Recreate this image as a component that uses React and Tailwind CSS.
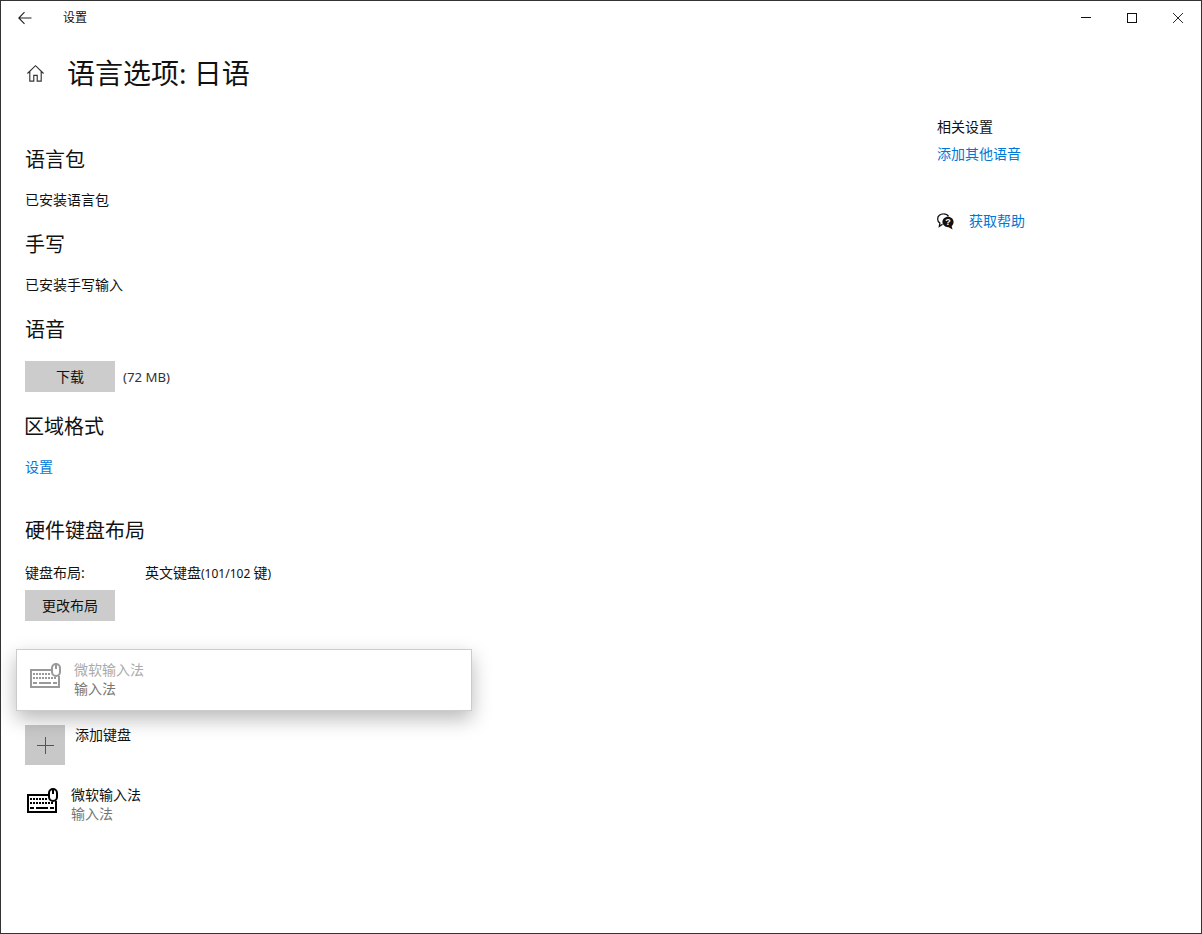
const FONT = "font-['Noto_Sans','Noto_Sans_CJK_SC',sans-serif]";

function KeyboardIcon({ className, color, sw = 2 }) {
  return (
    <svg viewBox="0 0 32 25" className={className} fill="none" stroke={color} strokeWidth={sw} shapeRendering="crispEdges">
      <path d="M23 7H2v17h28V13" />
      <rect x="23" y="1" width="8" height="12" rx="4" fill="#fff" shapeRendering="auto" />
      <path d="M27 1.5v4" />
      <path d="M4 11h17M4 15h24" strokeWidth="2" strokeDasharray="2 1" />
      <path d="M4 20h4M10 20h12M24 20h4" strokeWidth="2" />
    </svg>
  );
}

function Heading({ className = "", children }) {
  return <h2 className={`h-[28px] text-[20px] leading-[28px] font-normal text-[#111] ${className}`}>{children}</h2>;
}

function Body({ className = "", children }) {
  return <p className={`h-[20px] text-[14px] leading-[20px] text-[#111] ${className}`}>{children}</p>;
}

function GrayButton({ className = "", children }) {
  return (
    <button className={`h-[31px] w-[90px] bg-[#cccccc] text-[14px] leading-[20px] text-[#111] ${className}`}>
      {children}
    </button>
  );
}

export default function App() {
  return (
    <div className={`relative h-[934px] w-[1202px] overflow-hidden border border-[#333333] bg-white ${FONT}`}>
      <header className="flex h-[33px] items-center">
        <svg viewBox="0 0 16 16" className="ml-[16px] h-[16px] w-[16px]" fill="none" stroke="#222" strokeWidth="1.1">
          <path d="M14.5 8H2M7.5 2.2 1.8 8l5.7 5.8" />
        </svg>
        <span className="ml-[30px] text-[12px] leading-[16px] text-[#111]">设置</span>
        <div className="ml-auto flex h-full">
          <div className="flex w-[46px] items-center justify-center">
            <div className="h-px w-[10px] bg-[#111]" />
          </div>
          <div className="flex w-[46px] items-center justify-center">
            <div className="h-[10px] w-[10px] border border-[#111]" />
          </div>
          <div className="flex w-[46px] items-center justify-center">
            <svg viewBox="0 0 10 10" className="h-[10px] w-[10px]" fill="none" stroke="#111" strokeWidth="0.9">
              <path d="M0 0l10 10M10 0 0 10" />
            </svg>
          </div>
        </div>
      </header>

      <div className="flex">
        <main className="flex-1 pl-[24px]">
          <div className="flex h-[78px] items-center">
            <svg viewBox="0 0 20 20" className="ml-px h-[19px] w-[19px]" fill="none" stroke="#333" strokeWidth="1.2">
              <path d="M1.5 10 10 1.8l8.5 8.2M4 8v10h4.2v-6h3.6v6H16V8" />
            </svg>
            <h1 className="ml-[22px] text-[28px] leading-[36px] font-normal text-[#111]">语言选项: 日语</h1>
          </div>

          <Heading className="mt-[34px]">语言包</Heading>
          <Body className="mt-[16px]">已安装语言包</Body>
          <Heading className="mt-[21px]">手写</Heading>
          <Body className="mt-[16px]">已安装手写输入</Body>
          <Heading className="mt-[21px]">语音</Heading>

          <div className="mt-[17px] flex items-center">
            <GrayButton>下载</GrayButton>
            <span className="ml-[8px] text-[13.2px] leading-[20px] text-[#333]">(72 MB)</span>
          </div>

          <Heading className="mt-[21px] -ml-px">区域格式</Heading>
          <Body className="mt-[16px]">
            <a className="text-[#0078d7]">设置</a>
          </Body>

          <Heading className="mt-[40px]">硬件键盘布局</Heading>
          <div className="mt-[18px] flex h-[20px] text-[14px] leading-[20px] text-[#111]">
            <span className="w-[120px]">键盘布局:</span>
            <span className="text-[12px]">
              <span className="text-[14px]">英文键盘</span>(101/102 <span className="text-[14px]">键</span>)
            </span>
          </div>
          <GrayButton className="mt-[7px] block">更改布局</GrayButton>

          <div className="mt-[104px] flex">
            <div className="flex h-[40px] w-[40px] items-center justify-center bg-[#c8c8c8]">
              <svg viewBox="0 0 17 17" className="h-[17px] w-[17px]" fill="none" stroke="#555" strokeWidth="1" shapeRendering="crispEdges">
                <path d="M8.5 0v17M0 8.5h17" />
              </svg>
            </div>
            <span className="ml-[10px] text-[14px] leading-[20px] text-[#111]">添加键盘</span>
          </div>

          <div className="mt-[20px] flex">
            <div className="ml-px flex h-[40px] w-[32px] items-start pt-[3px]">
              <KeyboardIcon className="h-[25px] w-[32px]" color="#000" sw="2" />
            </div>
            <div className="ml-[13px]">
              <p className="text-[14px] leading-[20px] text-[#111]">微软输入法</p>
              <p className="-mt-px text-[14px] leading-[20px] text-[#767676]">输入法</p>
            </div>
          </div>
        </main>

        <aside className="w-[264px] pt-[83px]">
          <Body>相关设置</Body>
          <Body className="mt-[7px]">
            <a className="text-[#0078d7]">添加其他语音</a>
          </Body>
          <div className="mt-[47px] flex h-[20px] items-center">
            <svg viewBox="0 0 16 16" className="h-[17px] w-[17px]">
              <path d="M6.2.8C3 .8.6 2.9.6 5.6c0 1.6.8 3 2.1 3.9L2.2 12.5l3-2" fill="#fff" stroke="#111" strokeWidth="1.2" />
              <path d="M6.2.8c2 0 3.8 1 4.6 2.4" fill="none" stroke="#111" strokeWidth="1.2" />
              <path d="M10.3 3.6c3 0 5.3 2.2 5.3 4.9 0 1.5-.7 2.8-1.8 3.7l.8 3.4-3.6-2.3c-3.2.2-5.9-2-5.9-4.8 0-2.7 2.3-4.9 5.2-4.9z" fill="#111" />
              <text x="10.3" y="11.6" textAnchor="middle" fontSize="8.5" fontWeight="700" fill="#fff" fontFamily="Liberation Sans">?</text>
            </svg>
            <a className="ml-[15px] text-[14px] leading-[20px] text-[#0078d7]">获取帮助</a>
          </div>
        </aside>
      </div>

      <div className="absolute top-[648px] left-[15px] flex h-[62px] w-[456px] border border-[#cccccc] bg-white shadow-[0_8px_20px_rgba(0,0,0,0.28)]">
        <div className="ml-[12px] pt-[13px]">
          <KeyboardIcon className="h-[25px] w-[32px]" color="#999" sw="2" />
        </div>
        <div className="ml-[13px] pt-[10px]">
          <p className="text-[14px] leading-[20px] text-[#aaaaaa]">微软输入法</p>
          <p className="-mt-px text-[14px] leading-[20px] text-[#777777]">输入法</p>
        </div>
      </div>
    </div>
  );
}
